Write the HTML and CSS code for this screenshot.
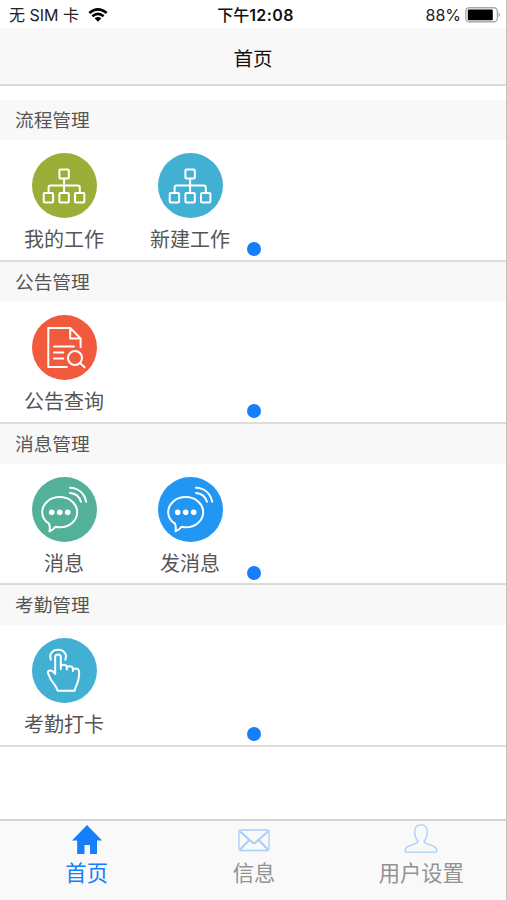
FILE: index.html
```html
<!DOCTYPE html>
<html lang="zh-CN">
<head>
  <meta charset="UTF-8">
  <title>首页</title>
  <meta name="viewport" content="width=device-width, initial-scale=1">
  <link rel="stylesheet" href="styles.css">
</head>
<body>
  <!-- shared icons -->
  <svg class="sprite" xmlns="http://www.w3.org/2000/svg">
    <symbol id="icon-flow" viewBox="0 0 65 65">
      <rect x="27.4" y="16.4" width="9.4" height="9.2" rx="1"/>
      <rect x="11.7" y="40" width="9.4" height="9.4" rx="1"/>
      <rect x="27.4" y="40" width="9.4" height="9.4" rx="1"/>
      <rect x="43" y="40" width="9.4" height="9.4" rx="1"/>
      <path d="M32.1 25.6V40M16.6 40v-5.5q0-2 2-2h27.2q2 0 2 2V40"/>
    </symbol>
    <symbol id="icon-chat" viewBox="0 0 65 65">
      <path d="M17 46.6C12.5 43.8 10.2 39.8 10.2 35.2C10.2 26.8 18 20.1 27.7 20.1S45.2 26.8 45.2 35.2S37.4 50.3 27.7 50.3Q25.5 50.3 23.5 49.8Q21 52.8 17.5 54.3Q18.3 50 17 46.6Z"/>
      <path d="M38 10.7C46.5 11 52.3 16.5 54.2 24.7M38 15.9C43.5 16.2 47.2 19.2 48.9 24.7"/>
      <g class="dots"><circle cx="19.7" cy="35.2" r="2.8"/><circle cx="27.7" cy="35.2" r="2.8"/><circle cx="35.7" cy="35.2" r="2.8"/></g>
    </symbol>
  </svg>

  <div class="phone">
    <header class="status-bar">
      <div class="carrier">
        <span>无 SIM 卡</span>
        <svg class="wifi" width="20" height="14" viewBox="0 0 20 14">
          <path d="M1.3 5.1Q10 -2.3 18.7 5.1M4.4 8.3Q10 3.6 15.6 8.3"/>
          <path class="wifi-dot" d="M6.6 10.2Q10 7.6 13.4 10.2L10 13.7Z"/>
        </svg>
      </div>
      <div class="time">下午<b>12:08</b></div>
      <div class="power">
        <span>88%</span>
        <svg width="36" height="16" viewBox="0 0 36 16">
          <rect x=".8" y=".8" width="31.6" height="14" rx="3.5" fill="#fff" stroke="#aaa" stroke-width="1.4"/>
          <rect x="2.8" y="2.6" width="25" height="10.6" rx="1"/>
          <path d="M33.6 5.3q3.2 2.500 0 5z" fill="#aaa"/>
        </svg>
      </div>
    </header>
    <h1 class="nav-title">首页</h1>

    <main>
      <section class="group">
        <h2>流程管理</h2>
        <div class="apps">
          <div class="app">
            <svg class="app-icon green"><use href="#icon-flow"/></svg>
            <span>我的工作</span>
          </div>
          <div class="app">
            <svg class="app-icon cyan"><use href="#icon-flow"/></svg>
            <span>新建工作</span>
          </div>
          <i class="page-dot"></i>
        </div>
      </section>

      <section class="group">
        <h2>公告管理</h2>
        <div class="apps">
          <div class="app">
            <svg class="app-icon red" viewBox="0 0 65 65">
              <path d="M34.8 52H16.3V12.9H38.2L48.6 23.5V32.3M38.2 12.9V23.5H48.6M22 31.4H42M22 37.5H31.3M22 43.6H31.3"/>
              <circle cx="43" cy="43" r="7"/>
              <path d="M48 48L52.6 52.3"/>
            </svg>
            <span>公告查询</span>
          </div>
          <i class="page-dot"></i>
        </div>
      </section>

      <section class="group">
        <h2>消息管理</h2>
        <div class="apps">
          <div class="app">
            <svg class="app-icon teal"><use href="#icon-chat"/></svg>
            <span>消息</span>
          </div>
          <div class="app">
            <svg class="app-icon blue"><use href="#icon-chat"/></svg>
            <span>发消息</span>
          </div>
          <i class="page-dot"></i>
        </div>
      </section>

      <section class="group">
        <h2>考勤管理</h2>
        <div class="apps">
          <div class="app">
            <svg class="app-icon cyan" viewBox="0 0 65 65">
              <path d="M18.9 21.6C16.6 16 20.6 11.8 26.1 11.8S35.6 16 33.3 21.6"/>
              <path d="M23.2 36V19.2Q23.200 16.5 26 16.5T28.8 19.2V31M28.8 27.6Q34.3 25.6 34.8 29V31.500M34.8 29Q40.3 27 40.900 30.500V33M40.9 31Q47 29 47.200 34.5Q47 43 43.5 49.500L42.6 52.8H25.8L23.8 48.5L18.800 41.500L15.900 34.8Q15.600 32.2 18.6 32.5Q21.5 33 23.2 36"/>
            </svg>
            <span>考勤打卡</span>
          </div>
          <i class="page-dot"></i>
        </div>
      </section>
    </main>

    <nav class="tab-bar">
      <a class="tab active">
        <svg width="34" height="32" viewBox="0 0 34 32">
          <path fill="#147efb" d="M17 1L32 16.5H27V30H20V21H14.5V30H7.2V16.5H2Z"/>
        </svg>
        <span>首页</span>
      </a>
      <a class="tab">
        <svg class="line" width="34" height="32" viewBox="0 0 34 32">
          <rect x="2" y="6" width="30" height="20.5" rx="1.5"/>
          <path class="thick" d="M3 7.5L15.500 18.500Q17 19.700 18.500 18.500L31 7.500M3 25.500L12.300 16M31 25.500L21.700 16"/>
        </svg>
        <span>信息</span>
      </a>
      <a class="tab">
        <svg class="line" width="34" height="32" viewBox="0 0 34 32">
          <path d="M14 17.2C11.5 14.5 10.7 11 10.7 7.7C10.7 3 13 .8 17 .8S23.3 3 23.3 7.7C23.3 11 22.5 14.5 20 17.2Q20 18.5 21.5 19.1L29.5 22.1Q32.8 23.6 32.8 27Q32.8 28.2 31.5 28.2H2.5Q1.2 28.2 1.2 27Q1.2 23.6 4.5 22.1L12.5 19.1Q14 18.5 14 17.2Z"/>
        </svg>
        <span>用户设置</span>
      </a>
    </nav>
  </div>
</body>
</html>
```

FILE: styles.css
```css
* {
  box-sizing: border-box;
}
body {
  margin: 0;
  background: #fff;
  font-family: Inter, "Noto Sans CJK SC", sans-serif;
  color: #555;
}
.sprite {
  display: none;
}
.phone {
  display: flex;
  flex-direction: column;
  height: 900px;
  border-right: 1px solid #c4c4c4;
}
.status-bar {
  display: grid;
  grid-template-columns: 1fr auto 1fr;
  align-items: center;
  height: 28px;
  padding: 2px 5px 0 9px;
  font-size: 16px;
  line-height: 24px;
  color: #222;
}
.carrier, .power {
  display: flex;
  align-items: center;
}
.carrier {
  gap: 9px;
}
.power {
  justify-content: flex-end;
  gap: 4px;
}
.wifi {
  fill: none;
  stroke: #000;
  stroke-width: 2.6;
}
.wifi .wifi-dot {
  fill: #000;
  stroke: none;
}
.time {
  padding-left: 1px;
  font-weight: 500;
  color: #111;
}
.time b {
  font-weight: 600;
  letter-spacing: 0.4px;
}
.nav-title {
  height: 58px;
  margin: 0;
  border-bottom: 2px solid #d9d9d9;
  background: #f8f8f8;
  font-size: 19.5px;
  font-weight: 400;
  line-height: 62px;
  text-align: center;
  color: #111;
}
main {
  flex: 1;
  padding-top: 14px;
}
.group {
  height: 161.75px;
  border-bottom: 2px solid #dcdcdc;
}
.group h2 {
  height: 40px;
  margin: 0;
  padding-left: 15px;
  background: #f8f8f8;
  font-size: 18.7px;
  font-weight: 400;
  line-height: 41px;
}
.apps {
  position: relative;
  display: flex;
}
.app {
  display: flex;
  flex-direction: column;
  align-items: center;
  width: 126px;
  padding: 13px 0 0 2px;
  font-size: 20px;
  line-height: 30px;
}
.app span {
  margin-top: 7px;
}
.app-icon {
  width: 65px;
  height: 65px;
  border-radius: 50%;
  fill: none;
  stroke: #fff;
  stroke-width: 2;
  stroke-linecap: round;
  stroke-linejoin: round;
}
.dots {
  fill: #fff;
  stroke: none;
}
.green { background: #9aae38; }
.cyan { background: #42b0d3; }
.red { background: #f15a3c; }
.teal { background: #54b199; }
.blue { background: #2196f3; }
.page-dot {
  position: absolute;
  left: 247px;
  top: 102px;
  width: 14px;
  height: 14px;
  border-radius: 50%;
  background: #147efb;
}
.tab-bar {
  display: flex;
  height: 81px;
  padding: 0 1px 0 3px;
  border-top: 2px solid #d2d2d2;
  background: #f9f9f9;
}
.tab {
  display: flex;
  flex: 1;
  flex-direction: column;
  align-items: center;
  padding-top: 3px;
  font-size: 21.3px;
  line-height: 34px;
  color: #929292;
}
.tab.active {
  color: #147efb;
}
.line {
  fill: none;
  stroke: #a9cdfa;
  stroke-width: 1.3;
}
.thick {
  stroke-width: 2;
}
```
